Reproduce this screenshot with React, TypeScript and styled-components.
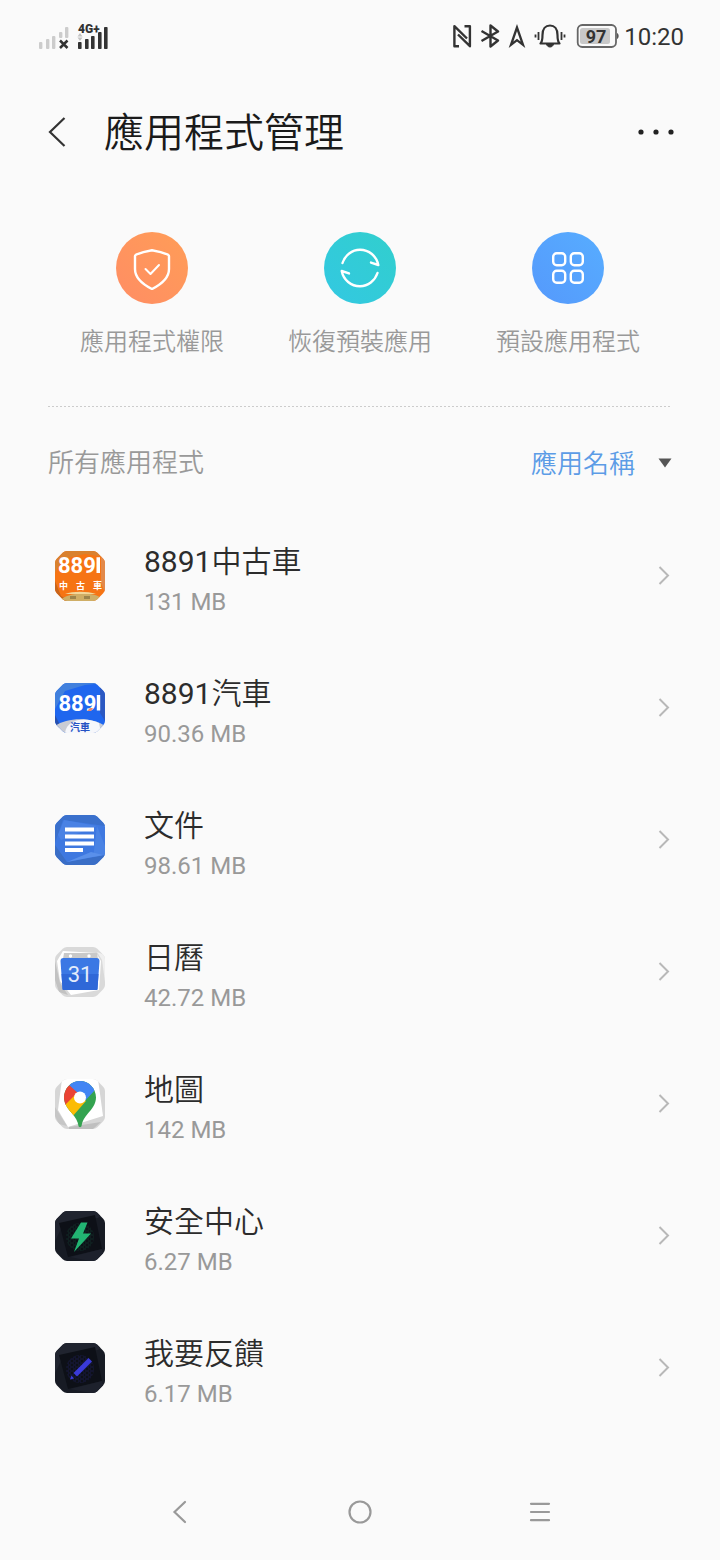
import React, { useState } from "react";
import styled, { createGlobalStyle } from "styled-components";

const GlobalStyle = createGlobalStyle`
  * { box-sizing: border-box; }
  body {
    margin: 0;
    background: #fafafa;
    color: #2c2c2c;
    font-family: Roboto, "Noto Sans CJK TC", sans-serif;
  }
  button, select { font: inherit; color: inherit; }
  svg { display: block; flex: none; }
`;

const Page = styled.div`
  display: flex;
  flex-direction: column;
  min-height: 100vh;
`;

const StatusBar = styled.div`
  display: flex;
  align-items: center;
  justify-content: space-between;
  height: 72px;
  padding: 0 36px 0 38px;
`;

const StatusGroup = styled.div<{ $gap: number }>`
  display: flex;
  align-items: center;
  gap: ${(p) => p.$gap}px;
`;

const Clock = styled.time`
  padding-top: 2px;
  font-size: 24px;
  font-weight: 400;
  line-height: 28px;
  color: #333;
`;

const Header = styled.header`
  display: flex;
  align-items: center;
  height: 120px;
  padding: 0 40px;
`;

const IconButton = styled.button`
  display: flex;
  align-items: center;
  justify-content: center;
  height: 48px;
  padding: 0;
  border: 0;
  background: none;
  cursor: pointer;
`;

const Title = styled.h1`
  flex: 1;
  margin: 0;
  padding: 4px 0 0 32px;
  font-size: 40px;
  font-weight: 350;
  line-height: 48px;
  color: #1a1a1a;
`;

const Actions = styled.nav`
  display: grid;
  grid-template-columns: repeat(3, 1fr);
  padding: 40px 48px 48px;
`;

const Action = styled.button`
  display: flex;
  flex-direction: column;
  align-items: center;
  gap: 22px;
  padding: 0;
  border: 0;
  background: none;
  font-size: 24px;
  font-weight: 350;
  line-height: 32px;
  color: #999;
  cursor: pointer;
`;

const ActionDisc = styled.span<{ $from: string; $to: string }>`
  display: flex;
  align-items: center;
  justify-content: center;
  width: 72px;
  height: 72px;
  border-radius: 50%;
  background: linear-gradient(45deg, ${(p) => p.$from}, ${(p) => p.$to});
`;

const Divider = styled.hr`
  height: 1px;
  margin: 0 50px 0 48px;
  border: 0;
  background: repeating-linear-gradient(90deg, #ccc 0 2px, transparent 2px 4px);
`;

const ListHeader = styled.div`
  display: flex;
  align-items: center;
  justify-content: space-between;
  height: 103px;
  padding: 8px 48px 0;
  font-size: 26px;
  font-weight: 350;
  line-height: 40px;
`;

const ListTitle = styled.h2`
  margin: 0;
  font-size: 26px;
  font-weight: 350;
  color: #999;
`;

const SortField = styled.label`
  display: grid;
  align-items: center;
  color: #5c9ce6;

  > * { grid-area: 1 / 1; }
  > svg { justify-self: end; pointer-events: none; }
`;

const SortSelect = styled.select`
  appearance: none;
  padding: 2px 36px 0 0;
  border: 0;
  background: none;
  cursor: pointer;
`;

const AppList = styled.ul`
  flex: 1;
  margin: 0;
  padding: 0;
  list-style: none;
`;

const AppRow = styled.a`
  display: flex;
  align-items: center;
  gap: 39px;
  height: 132px;
  padding: 0 48px 0 55px;
  color: inherit;
  text-decoration: none;
`;

const AppText = styled.div`
  flex: 1;
  min-width: 0;
  padding-top: 8px;
`;

const AppName = styled.div`
  font-size: 30px;
  font-weight: 350;
  line-height: 44px;
  color: #2c2c2c;
`;

const Digits = styled.span`
  font-weight: 400;
`;

const AppSize = styled.div`
  font-size: 24px;
  line-height: 36px;
  color: #999;
`;

const NavBar = styled.nav`
  display: grid;
  grid-template-columns: repeat(3, 1fr);
  justify-items: center;
  align-items: center;
  height: 96px;
  padding: 0 12.5%;
`;

const NavButton = styled(IconButton)`
  width: 72px;
`;

const NO_SIM_BARS = [
  [1, 20, 7],
  [8, 17, 10],
  [14, 14, 13],
  [21, 10, 6],
  [27, 5, 11],
];
const LTE_BARS = [
  [2, 20, 7],
  [9, 17, 10],
  [15, 14, 13],
  [22, 10, 17],
  [28, 5, 22],
];

const NoSimSignal = () => (
  <svg width="32" height="28" viewBox="0 0 32 28">
    {NO_SIM_BARS.map(([x, y, h]) => (
      <rect key={x} x={x} y={y} width="3.400" height={h} rx="1" fill="#ccc" />
    ))}
    <path d="M22 18.500l7.500 7.500M29.500 18.500l-7.500 7.500" stroke="#333" strokeWidth="2.500" />
  </svg>
);

const LteSignal = () => (
  <svg width="34" height="28" viewBox="0 0 34 28">
    {LTE_BARS.map(([x, y, h]) => (
      <rect key={x} x={x} y={y} width="3.600" height={h} rx="0.800" fill="#333" />
    ))}
    <path d="M1.500 14.500l2.500-3.500 2.500 3.500zM1.500 15.500l2.500 3.500 2.500-3.500z" fill="#c4c4c4" />
    <text x="2" y="10.500" fontFamily="Roboto" fontSize="12" fontWeight="900" fill="#333" stroke="#fafafa" strokeWidth="1" paintOrder="stroke">
      4G+
    </text>
  </svg>
);

const NfcIcon = () => (
  <svg width="20" height="24" viewBox="0 0 20 24" fill="none" stroke="#333" strokeWidth="2.400">
    <path d="M7 22.200H2.400V2.200L15 14.500M12.500 2.200h5.400v20L6 10.500" strokeLinejoin="round" />
  </svg>
);

const BluetoothIcon = () => (
  <svg width="20" height="24" viewBox="0 0 20 24" fill="none" stroke="#333" strokeWidth="2.400" strokeLinejoin="round">
    <path d="M1.500 7L18 16.500 10.500 22.500V1.500L18 7.500 1.500 17" />
  </svg>
);

const LocationIcon = () => (
  <svg width="18" height="24" viewBox="0 0 18 24" fill="none" stroke="#333" strokeWidth="2.300" strokeLinejoin="miter">
    <path d="M9 3.500L3 20.800l6-4.600 6 4.600z" />
  </svg>
);

const BellIcon = () => (
  <svg width="34" height="24" viewBox="0 0 34 24" fill="none" stroke="#333" strokeWidth="2.200">
    <path d="M6.500 19.500h19c-1.800-1.800-2-3-2-8.500C23.500 5 20.500 1.500 16 1.500S8.500 5 8.500 11c0 5.500-.2 6.700-2 8.500z" strokeLinejoin="round" />
    <path d="M12.500 20c.5 4 6.500 4 7 0z" fill="#333" strokeWidth="1" />
    <path d="M4.500 8v8M27.500 8v8M1.500 10.500v3M30.500 10.500v3" strokeWidth="1.800" />
  </svg>
);

const BatteryIcon = () => (
  <svg width="43" height="24" viewBox="0 0 43 24">
    <rect x="1.700" y="1" width="38.300" height="22" rx="4.500" fill="none" stroke="#666" strokeWidth="1.800" />
    <path d="M41 9c2.200.8 2.200 5.200 0 6z" fill="#555" />
    <rect x="4" y="4" width="30" height="16" rx="2.500" fill="#c8c8c8" />
    <text x="20" y="18.500" textAnchor="middle" fontFamily="Roboto" fontSize="18" fontWeight="700" fill="#333">
      97
    </text>
  </svg>
);

const ShieldIcon = () => (
  <svg width="40" height="44" viewBox="0 0 40 44" fill="none" stroke="#fff" strokeLinecap="round" strokeLinejoin="round">
    <path d="M20 4.200c5.500.9 11 2.300 16 4.500.8.400 1 .8 1 1.600V23c0 9-9 16-17 20C12 39 3 32 3 23V10.300c0-.8.200-1.200 1-1.600 5-2.200 10.500-3.600 16-4.500z" strokeWidth="2.400" />
    <path d="M13.500 23l5 5L27 19" strokeWidth="2" />
  </svg>
);

const RestoreIcon = () => (
  <svg width="44" height="44" viewBox="0 0 44 44" fill="none" stroke="#fff" strokeWidth="2.400" strokeLinecap="round" strokeLinejoin="round">
    <path d="M4.500 17C7 9.300 14 3.800 22 3.800c9 0 16.500 6.200 18.300 15.200l-7.300-2.400" />
    <path d="M39.500 27c-2.500 7.700-9.500 13.200-17.500 13.200-9 0-16.500-6.200-18.300-15.200l7.300 2.400" />
  </svg>
);

const GridIcon = () => (
  <svg width="36" height="36" viewBox="0 0 36 36" fill="none" stroke="#fff" strokeWidth="2.400">
    <rect x="3.200" y="3.200" width="12" height="12" rx="3.500" />
    <rect x="20.800" y="3.200" width="12" height="12" rx="3.500" />
    <rect x="3.200" y="20.800" width="12" height="12" rx="3.500" />
    <rect x="20.800" y="20.800" width="12" height="12" rx="3.500" />
  </svg>
);

const Chevron = () => (
  <svg width="16" height="20" viewBox="0 0 16 20" fill="none" stroke="#b8b8b8" strokeWidth="2">
    <path d="M3.500 1l8.500 8.500-8.500 8.500" />
  </svg>
);

const TILE_PATH =
  "M12 0H38Q40.500 0 42.300 1.800L48.200 7.700Q50 9.500 50 12V38Q50 40.500 48.200 42.300L42.300 48.200Q40.500 50 38 50H12Q9.500 50 7.700 48.200L1.800 42.300Q0 40.500 0 38V12Q0 9.500 1.800 7.700L7.700 1.800Q9.500 0 12 0Z";

const Tile = ({ id, children }: { id: string; children: React.ReactNode }) => (
  <svg width="50" height="50" viewBox="0 0 50 50">
    <defs>
      <clipPath id={id}>
        <path d={TILE_PATH} />
      </clipPath>
    </defs>
    <g clipPath={`url(#${id})`}>{children}</g>
  </svg>
);

const UsedCarsIcon = () => (
  <Tile id="used-cars">
    <rect width="50" height="50" fill="#f67414" />
    <path d="M0 0h50v6L30 3 8 8 0 22z" fill="#d9812f" />
    <path d="M46 0l4 8v34l-4-10z" fill="#e2894a" />
    <path d="M0 30l6 15 10 5H0z" fill="#c8641c" />
    <path d="M5 50c5-9 35-10 42-2v2z" fill="#cfae66" />
    <path d="M10 43c8-3 22-3 31 0z" fill="#f2d79a" />
    <path d="M15 45h6v3h-6zM29 45h6v3h-6z" fill="#9c844c" />
    <text x="3" y="22" fontFamily="Roboto" fontSize="22" fontWeight="700" fill="#fff">889</text>
    <path d="M41.500 6.300H45V22h-3.500z" fill="#fff" />
    <g fontFamily="Noto Sans CJK TC" fontSize="9" fontWeight="700" fill="#fff">
      <text x="4" y="38">中</text>
      <text x="21" y="38">古</text>
      <text x="38" y="38">車</text>
    </g>
  </Tile>
);

const CarsIcon = () => (
  <Tile id="cars">
    <rect width="50" height="50" fill="#1f66ee" />
    <path d="M0 0h50L30 2 10 8 0 26z" fill="#4180dd" />
    <path d="M45 0l5 8v30l-5-8z" fill="#2b58c2" />
    <path d="M0 32l6 12-6 2z" fill="#2850ad" />
    <path d="M0 43c12-9 38-9 50 0v7H0z" fill="#c9ccd4" />
    <path d="M10 50c2-15 22-16 34-10l2 10z" fill="#f6f7fb" />
    <text x="3.500" y="27.500" fontFamily="Roboto" fontSize="22" fontWeight="700" fill="#fff">889</text>
    <path d="M41.800 12h3.400v15.500h-3.400z" fill="#fff" />
    <path d="M32 28l3-3h3l-2 3z" fill="#f0886a" />
    <text x="25" y="48" textAnchor="middle" fontFamily="Noto Sans CJK TC" fontSize="10" fontWeight="700" fill="#2552c4">汽車</text>
  </Tile>
);

const DocsIcon = () => (
  <Tile id="docs">
    <rect width="50" height="50" fill="#3e78e0" />
    <path d="M0 0h50v11L8 5 0 28z" fill="#3a70cc" />
    <path d="M9 5l33 6L6 25 3 20z" fill="#4a82e4" />
    <path d="M42 11l8 20v12L38 44z" fill="#4a83e4" />
    <path d="M0 30l12 17 38-7v10H0z" fill="#3a6ec6" />
    <path d="M12 47l24-10 12 3z" fill="#5a90ea" />
    <path d="M10 12.500h29v4H10zM10 19.500h29v4H10zM10 26.500h29v4H10zM10 33h18v4H10z" fill="#fff" />
  </Tile>
);

const CalendarIcon = () => (
  <Tile id="calendar">
    <rect width="50" height="50" fill="#d9d9d9" />
    <path d="M8 4l33 2 5 8-2 29-28 5L5 34 2 14z" fill="#fff" />
    <path d="M0 14l5 22 8 12-9-3-4-12z" fill="#c2c2c2" />
    <path d="M42 5l5 8 3 22V8z" fill="#efefef" />
    <path d="M9 6h33l1 6H8z" fill="#c9c9c9" />
    <circle cx="15.500" cy="9" r="1.700" fill="#fff" />
    <circle cx="34" cy="9" r="1.700" fill="#fff" />
    <path d="M5.500 14q0-3 3-3h33q3 0 3 3l-2 28q0 1-1 1h-33q-1 0-1-1z" fill="#3b78e4" />
    <path d="M6.500 27h37l-1 15q0 1-1 1h-33q-1 0-1-1z" fill="#2f68d8" />
    <text x="25" y="35" textAnchor="middle" fontFamily="Roboto" fontSize="22" fontWeight="400" fill="#e4ecfb">31</text>
  </Tile>
);

const MapsIcon = () => (
  <Tile id="maps">
    <rect width="50" height="50" fill="#d6d6d6" />
    <path d="M7 0h36l5 37-35 11L3 31z" fill="#fff" />
    <path d="M0 28l12 19-8-2-4-8z" fill="#c6c6c6" />
    <path d="M14 48l32-5-8 7H14z" fill="#bfbfbf" />
    <clipPath id="map-pin">
      <path d="M25 2C16 2 9 9.500 9 18.500 9 25 13 30 17.500 35c3 3.500 5.300 7 6 12 .2 1.500 2.800 1.500 3 0 .7-5 3-8.500 6-12C37 30 41 25 41 18.500 41 9.500 34 2 25 2z" />
    </clipPath>
    <g clipPath="url(#map-pin)">
      <path d="M0 0h50v50H0z" fill="#34a350" />
      <path d="M14 0v6l8 9 6 9L42 9V0z" fill="#4285f4" />
      <path d="M14.500 6.500L24 15 10 28H4V4z" fill="#ea4335" />
      <path d="M9 27l13-13 9 8-14 16H4z" fill="#fbbc04" />
    </g>
    <circle cx="25" cy="18.500" r="6" fill="#fff" />
  </Tile>
);

const DarkFacets = () => (
  <>
    <rect width="50" height="50" fill="#171b24" />
    <path d="M0 0h50L43 7 9 12 0 30z" fill="#20242f" />
    <path d="M4 12L40 4l7 34-34 8z" fill="#0d1017" />
    <path d="M47 38L15 46l20 4h15z" fill="#1d212c" />
  </>
);

const HexMesh = ({ id, color }: { id: string; color: string }) => (
  <>
    <pattern id={id} width="5" height="4" patternUnits="userSpaceOnUse">
      <path d="M0 2l1-2h2l1 2-1 2H1zM4 2h1" fill="none" stroke={color} strokeWidth="0.500" />
    </pattern>
    <circle cx="25" cy="26" r="14" fill={`url(#${id})`} opacity="0.600" />
  </>
);

const SecurityIcon = () => (
  <Tile id="security">
    <DarkFacets />
    <HexMesh id="mesh-green" color="#14533c" />
    <path d="M26 11.500h6.500L28 22.500h8L19 41l5-13.500h-8z" fill="#22b573" />
  </Tile>
);

const FeedbackIcon = () => (
  <Tile id="feedback">
    <DarkFacets />
    <HexMesh id="mesh-blue" color="#27297e" />
    <path d="M33.500 15l3.500 3.500L22 33.500 18.500 30z" fill="#3a3ad8" />
    <path d="M16.500 32.500l2.500 3-4 1z" fill="#3a3ad8" />
  </Tile>
);

const ACTIONS = [
  { label: "應用程式權限", from: "#ff8d64", to: "#ff9d57", Icon: ShieldIcon },
  { label: "恢復預裝應用", from: "#33c8e2", to: "#31cfcd", Icon: RestoreIcon },
  { label: "預設應用程式", from: "#5599fc", to: "#57adff", Icon: GridIcon },
];

const APPS = [
  { digits: "8891", name: "中古車", size: "131 MB", Icon: UsedCarsIcon },
  { digits: "8891", name: "汽車", size: "90.36 MB", Icon: CarsIcon },
  { name: "文件", size: "98.61 MB", Icon: DocsIcon },
  { name: "日曆", size: "42.72 MB", Icon: CalendarIcon },
  { name: "地圖", size: "142 MB", Icon: MapsIcon },
  { name: "安全中心", size: "6.27 MB", Icon: SecurityIcon },
  { name: "我要反饋", size: "6.17 MB", Icon: FeedbackIcon },
];

export default function App() {
  const [sort, setSort] = useState("name");

  return (
    <Page lang="zh-Hant">
      <GlobalStyle />
      <StatusBar>
        <StatusGroup $gap={6}>
          <NoSimSignal />
          <LteSignal />
        </StatusGroup>
        <StatusGroup $gap={5}>
          <StatusGroup $gap={8}>
            <NfcIcon />
            <BluetoothIcon />
            <LocationIcon />
            <BellIcon />
            <BatteryIcon />
          </StatusGroup>
          <Clock>10:20</Clock>
        </StatusGroup>
      </StatusBar>

      <Header>
        <IconButton aria-label="返回">
          <svg width="32" height="32" viewBox="0 0 32 32" fill="none" stroke="#333" strokeWidth="2.200">
            <path d="M24.500 2L10 16l14.500 14" />
          </svg>
        </IconButton>
        <Title>應用程式管理</Title>
        <IconButton aria-label="更多">
          <svg width="48" height="8" viewBox="0 0 48 8" fill="#222">
            <circle cx="9" cy="4" r="2.600" />
            <circle cx="24" cy="4" r="2.600" />
            <circle cx="39" cy="4" r="2.600" />
          </svg>
        </IconButton>
      </Header>

      <Actions>
        {ACTIONS.map(({ label, from, to, Icon }) => (
          <Action key={label}>
            <ActionDisc $from={from} $to={to}>
              <Icon />
            </ActionDisc>
            {label}
          </Action>
        ))}
      </Actions>

      <Divider />

      <ListHeader>
        <ListTitle>所有應用程式</ListTitle>
        <SortField>
          <SortSelect aria-label="排序" value={sort} onChange={(e) => setSort(e.target.value)}>
            <option value="name">應用名稱</option>
          </SortSelect>
          <svg width="14" height="10" viewBox="0 0 14 10">
            <path d="M0.500 0.500h13L7 9.500z" fill="#555" />
          </svg>
        </SortField>
      </ListHeader>

      <AppList>
        {APPS.map(({ digits, name, size, Icon }) => (
          <li key={name}>
            <AppRow href="#">
              <Icon />
              <AppText>
                <AppName>
                  {digits && <Digits>{digits}</Digits>}
                  {name}
                </AppName>
                <AppSize>{size}</AppSize>
              </AppText>
              <Chevron />
            </AppRow>
          </li>
        ))}
      </AppList>

      <NavBar>
        <NavButton aria-label="返回">
          <svg width="24" height="24" viewBox="0 0 24 24" fill="none" stroke="#999" strokeWidth="2.200" strokeLinecap="round">
            <path d="M17 2L6.500 12 17 22" />
          </svg>
        </NavButton>
        <NavButton aria-label="主畫面">
          <svg width="24" height="24" viewBox="0 0 24 24" fill="none" stroke="#999" strokeWidth="2.200">
            <circle cx="12" cy="12" r="10.500" />
          </svg>
        </NavButton>
        <NavButton aria-label="最近使用">
          <svg width="24" height="24" viewBox="0 0 24 24" fill="none" stroke="#999" strokeWidth="2.200" strokeLinecap="round">
            <path d="M3 3.800h18M3 12h18M3 20.200h18" />
          </svg>
        </NavButton>
      </NavBar>
    </Page>
  );
}
